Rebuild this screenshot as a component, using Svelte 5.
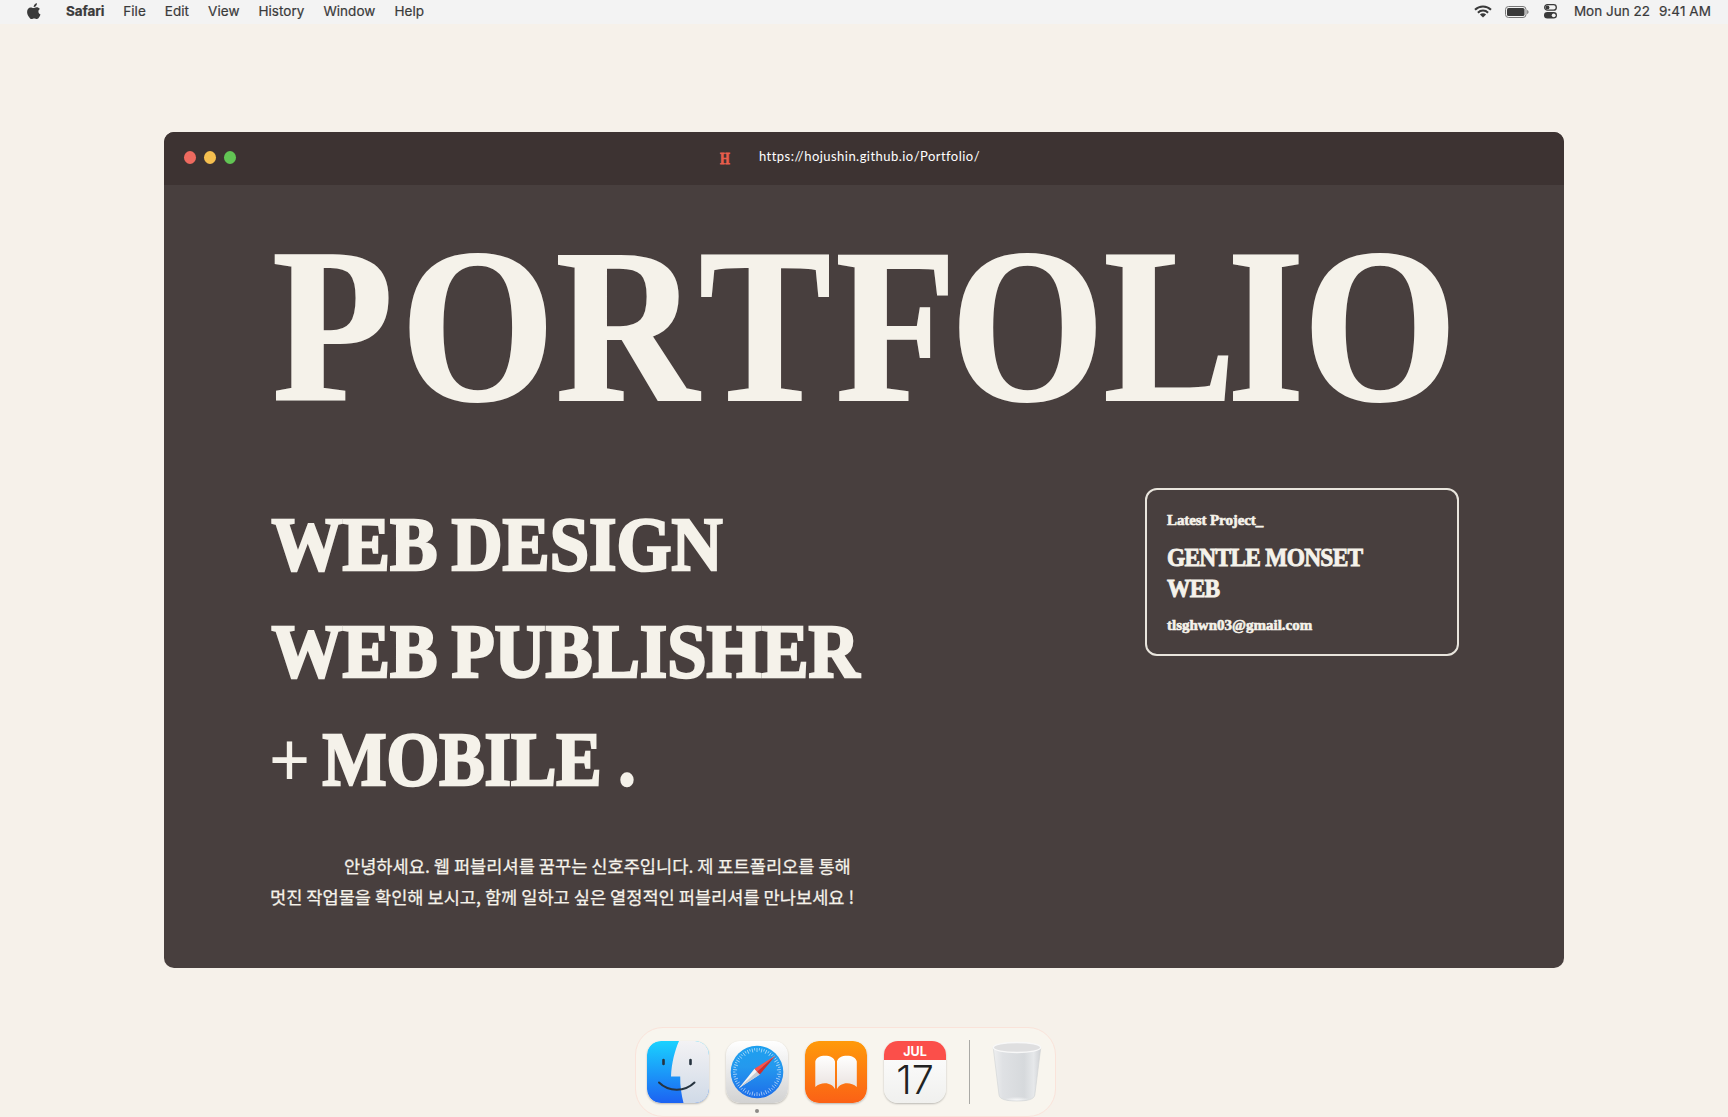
<script>
  const menus = ['File', 'Edit', 'View', 'History', 'Window', 'Help'];

  // Left edge of every headline letter, in the unscaled width of the type.
  const squeeze = 0.9;
  const titleX = [2.3, 130.8, 285.5, 428.9, 565.5, 680.6, 833.4, 957.3, 1033.1]
    .map((x) => x / squeeze)
    .join(' ');

  const roles = [
    { y: 60, words: [['WEB', 1.5, 166], ['DESIGN', 181.5, 271]] },
    { y: 167.3, words: [['WEB', 1.5, 166], ['PUBLISHER', 181.5, 408]] },
    { y: 275, words: [['+', 0, 39], ['MOBILE .', 52.5, 313]] },
  ];

  const ticks = Array.from({ length: 60 }, (_, i) => i * 6);
</script>

<div class="desktop">
  <header class="menubar">
    <svg class="apple" viewBox="0 0 14 17" width="14" height="17">
      <path d="M9.900 0.300c.1 1-.3 1.900-.9 2.600-.6.7-1.400 1.200-2.300 1.100-.1-.9.3-1.900.9-2.500C8.200.8 9.200.3 9.900.3zM12.900 5.900c-.9.6-1.500 1.400-1.500 2.600 0 1.400.8 2.500 2.100 3-.3.9-.7 1.700-1.200 2.500-.7 1-1.400 2-2.500 2-1 0-1.400-.6-2.600-.6s-1.600.6-2.600.6c-1.100 0-1.900-1.100-2.600-2.100C.7 12.200.1 10.500.1 8.900c0-2.900 1.700-4.500 3.500-4.500 1.100 0 2 .7 2.800.7.700 0 1.800-.8 3.100-.8 1.400 0 2.600.6 3.400 1.600z" />
    </svg>
    <b class="app-name">Safari</b>
    <nav>
      {#each menus as m}<span>{m}</span>{/each}
    </nav>
    <div class="status">
      <svg class="wifi" viewBox="0 0 18 13" width="18" height="13">
        <g fill="none" stroke="#3a3a3a" stroke-width="2">
          <path d="M1 4.800a11.300 11.300 0 0 1 16 0" />
          <path d="M3.900 7.700a7.200 7.200 0 0 1 10.200 0" />
        </g>
        <path d="M9 12.600 5.900 9.500a4.400 4.400 0 0 1 6.200 0z" fill="#3a3a3a" />
      </svg>
      <svg class="battery" viewBox="0 0 24 12" width="24" height="12">
        <rect x=".5" y=".5" width="20.500" height="11" rx="3" fill="none" stroke="#777" />
        <rect x="2" y="2" width="17.500" height="8" rx="1.600" fill="#3a3a3a" />
        <path d="M22.200 4v4c.8-.3 1.300-1.100 1.300-2s-.5-1.700-1.300-2z" fill="#777" />
      </svg>
      <svg class="control" viewBox="0 0 13 15" width="13" height="15">
        <rect x=".7" y=".7" width="11.600" height="5.400" rx="2.700" fill="none" stroke="#3a3a3a" stroke-width="1.300" />
        <circle cx="3.500" cy="3.400" r="1.900" fill="#3a3a3a" />
        <rect x="0" y="8" width="13" height="6.600" rx="3.300" fill="#3a3a3a" />
        <circle cx="9.700" cy="11.300" r="1.900" fill="#f2f2f2" />
      </svg>
      <span class="date">Mon Jun 22</span>
      <span class="time">9:41 AM</span>
    </div>
  </header>

  <main class="window">
    <div class="titlebar">
      <div class="lights"><i class="red"></i><i class="yellow"></i><i class="green"></i></div>
      <span class="favicon">H</span>
      <span class="url">https://hojushin.github.io/Portfolio/</span>
    </div>

    <div class="page">
      <svg class="title" viewBox="0 0 1188 170" width="1188" height="170">
        <text x={titleX} y="158.200" transform="scale({squeeze} 1)">PORTFOLIO</text>
      </svg>

      <div class="columns">
        <svg class="roles" viewBox="0 0 620 290" width="620" height="290">
          {#each roles as r}
            {#each r.words as [word, x, w]}
              <text {x} y={r.y} textLength={w} lengthAdjust="spacingAndGlyphs" class:plus={word === '+'}>{word}</text>
            {/each}
          {/each}
        </svg>

        <aside class="card">
          <div class="label">Latest Project_</div>
          <div class="project">GENTLE MONSET<br />WEB</div>
          <div class="mail">tlsghwn03@gmail.com</div>
        </aside>
      </div>

      <p class="intro">
        <span class="first">안녕하세요. 웹 퍼블리셔를 꿈꾸는 신호주입니다. 제 포트폴리오를 통해</span>
        <span>멋진 작업물을 확인해 보시고, 함께 일하고 싶은 열정적인 퍼블리셔를 만나보세요 !</span>
      </p>
    </div>
  </main>

  <footer class="dock">
    <svg class="icon" viewBox="0 0 62 62" width="62" height="62">
      <defs>
        <linearGradient id="fb" x2="0" y2="1"><stop stop-color="#1ad2ff" /><stop offset="1" stop-color="#1c62f2" /></linearGradient>
        <linearGradient id="fw" x2="0" y2="1"><stop stop-color="#f3f2f4" /><stop offset="1" stop-color="#d0dae7" /></linearGradient>
        <clipPath id="fc"><rect width="62" height="62" rx="14" /></clipPath>
      </defs>
      <g clip-path="url(#fc)">
        <rect width="62" height="62" fill="url(#fb)" />
        <path d="M32 0C28 9 24.500 22 24 35.500h9.200C33 45 34.500 54 36.500 62H62V0z" fill="url(#fw)" />
      </g>
      <g fill="none" stroke="#26333f" stroke-linecap="round">
        <path d="M16.500 19v4M43.500 19v4" stroke-width="2.600" />
        <path d="M12 41.500c9.500 9.500 26 9.500 35.500 0" stroke-width="2" />
      </g>
    </svg>

    <div class="running">
      <svg class="icon" viewBox="0 0 62 62" width="62" height="62">
        <defs>
          <linearGradient id="sb" x2="0" y2="1"><stop stop-color="#fff" /><stop offset="1" stop-color="#d2d2d2" /></linearGradient>
          <linearGradient id="sc" x2="0" y2="1"><stop stop-color="#1da0ef" /><stop offset=".4" stop-color="#2499ee" /><stop offset="1" stop-color="#1d6de9" /></linearGradient>
        </defs>
        <rect width="62" height="62" rx="14" fill="url(#sb)" />
        <circle cx="31" cy="31" r="26.300" fill="url(#sc)" />
        {#each ticks as a, i}
          <path d={i % 2 ? 'M31 7v2.400' : 'M31 7v4'} transform="rotate({a} 31 31)" stroke="#fff" stroke-opacity=".75" stroke-width=".7" />
        {/each}
        <path d="M13 47 28.500 27.800 33.800 33.500z" fill="#f4f4f4" />
        <path d="M13 47 31 30.500 33.800 33.500z" fill="#c5cbd3" />
        <path d="M49.700 14.500 28.500 27.800 31 30.700z" fill="#ff5148" />
        <path d="M49.700 14.500 33.800 33.500 31 30.700z" fill="#d02f2b" />
      </svg>
      <i class="dot"></i>
    </div>

    <svg class="icon" viewBox="0 0 62 62" width="62" height="62">
      <defs>
        <linearGradient id="bo" x2="0" y2="1"><stop stop-color="#ff9a0a" /><stop offset="1" stop-color="#fb6116" /></linearGradient>
        <linearGradient id="bp" x2="0" y2="1"><stop stop-color="#fff" /><stop offset="1" stop-color="#e9e2df" /></linearGradient>
      </defs>
      <rect width="62" height="62" rx="14" fill="url(#bo)" />
      <path d="M10.300 20.500C11 16.500 15 14.700 20 14.700s9.300 1.800 10 5.800V48c-2-3.500-5.500-5.700-10-5.700-3.700 0-7 1.200-9.700 3.700zM51.800 20.500C51 16.500 47 14.700 42 14.700s-9.300 1.800-10 5.800V48c2-3.500 5.500-5.700 10-5.700 3.700 0 7 1.200 9.800 3.700z" fill="url(#bp)" />
    </svg>

    <div class="icon calendar">
      <div class="month">JUL</div>
      <div class="day">17</div>
    </div>

    <i class="divider"></i>

    <svg class="trash" viewBox="0 0 50 62" width="50" height="62">
      <defs>
        <linearGradient id="tb"><stop stop-color="#eeeff0" /><stop offset=".2" stop-color="#dfe1e4" /><stop offset=".65" stop-color="#d6d9dc" /><stop offset=".85" stop-color="#e6e8ea" /><stop offset="1" stop-color="#d0d2d5" /></linearGradient>
        <radialGradient id="tg" cx=".5" cy="1" r=".4"><stop stop-color="#fff" stop-opacity=".9" /><stop offset="1" stop-color="#fff" stop-opacity="0" /></radialGradient>
      </defs>
      <path d="M1.200 6.500 7 54c.6 4.300 7 6 18 6s17-1.700 17.800-6L48.800 6.500z" fill="url(#tb)" stroke="#cfd1d3" stroke-width=".6" />
      <path d="M7 53.500c.6 4.300 7 6 18 6s17-1.700 17.800-6C40 49 10 49 7 53.500z" fill="url(#tg)" />
      <ellipse cx="25" cy="6.500" rx="23.700" ry="5" fill="#dfdfe0" stroke="#f8f8f8" stroke-width="1.300" />
    </svg>
  </footer>
</div>

<style>
  :global(body) { margin: 0; overflow: hidden; }

  .desktop {
    width: 1728px;
    height: 1117px;
    box-sizing: border-box;
    display: flex;
    flex-direction: column;
    align-items: center;
    background: #f6f1ea;
    font-family: Inter, "Liberation Sans", sans-serif;
    overflow: hidden;
  }

  .menubar {
    width: 100%;
    height: 24px;
    flex: none;
    box-sizing: border-box;
    padding: 0 17px 1px 27px;
    display: flex;
    align-items: center;
    background: #f3f3f3;
    color: #3a3a3a;
    font-size: 13.500px;
    line-height: 23px;
    white-space: nowrap;
    -webkit-text-stroke: 0.2px #3a3a3a;
  }
  .apple { fill: #3a3a3a; }
  .app-name { margin-left: 25px; font-weight: 700; letter-spacing: -0.1px; }
  nav { display: flex; gap: 19px; margin-left: 19px; letter-spacing: 0.040px; }
  .status { display: flex; align-items: center; margin-left: auto; }
  .battery { margin-left: 13px; }
  .control { margin-left: 15px; }
  .date { margin-left: 17px; }
  .time { margin-left: 9px; letter-spacing: 0.080px; }

  .window {
    width: 1400px;
    height: 836px;
    margin-top: 108px;
    flex: none;
    border-radius: 10px;
    overflow: hidden;
    background: #483f3e;
    color: #f5f2ea;
  }
  .titlebar {
    height: 53px;
    display: flex;
    align-items: center;
    background: #3d3332;
  }
  .lights { display: flex; gap: 8px; margin: -2px 0 0 20px; width: 536px; }
  .lights i { width: 12px; height: 13px; border-radius: 50%; }
  .red { background: #ee6a5f; }
  .yellow { background: #f5bf4f; }
  .green { background: #62c554; }
  .favicon {
    width: 39px;
    font: bold 16px/20px "Liberation Serif", serif;
    color: #e85d4c;
    -webkit-text-stroke: 0.8px #e85d4c;
    transform: scaleX(0.78);
    transform-origin: left;
  }
  .url {
    font: 13px/20px Lato, sans-serif;
    color: #fff;
    letter-spacing: 0.460px;
    margin-top: -5px;
  }

  .page { padding: 57px 104px 0 106px; }
  svg text {
    font-family: "Liberation Serif", "Times New Roman", serif;
    font-weight: 700;
    fill: #f5f2ea;
    stroke: #f5f2ea;
  }
  .title { display: block; overflow: visible; }
  .title text { font-size: 220px; stroke-width: 2px; }
  .columns {
    display: flex;
    justify-content: space-between;
    align-items: flex-start;
    margin-top: 76px;
    width: 1189px;
  }
  .roles { margin-top: 22px; overflow: visible; }
  .roles text { font-size: 77px; stroke-width: 2.600px; }
  .roles .plus { font-weight: 400; stroke-width: 2px; }

  .card {
    width: 314px;
    height: 168px;
    box-sizing: border-box;
    border: 2px solid #e9e5dd;
    border-radius: 12px;
    padding: 20px 0 0 20px;
    font-family: "Liberation Serif", serif;
    font-weight: 700;
    -webkit-text-stroke: 0.6px #f5f2ea;
    white-space: nowrap;
  }
  .label { font-size: 15px; line-height: 20px; letter-spacing: -0.1px; }
  .project {
    width: 260px;
    font-size: 26px;
    line-height: 31px;
    margin-top: 12px;
    letter-spacing: -0.8px;
    -webkit-text-stroke-width: 0.9px;
    transform: scaleX(0.9);
    transform-origin: left;
  }
  .mail { font-size: 15px; line-height: 20px; margin-top: 11px; }

  .intro {
    margin: 50px 0 0 0;
    display: flex;
    flex-direction: column;
    font: 400 17.600px/31px "Noto Sans CJK KR", sans-serif;
    -webkit-text-stroke: 0.25px #f5f2ea;
    white-space: nowrap;
  }
  .first { margin-left: 74px; }

  .dock {
    width: 421px;
    height: 90px;
    margin-top: 59px;
    margin-right: 37px;
    flex: none;
    box-sizing: border-box;
    border: 1px solid #fae3da;
    border-radius: 28px;
    background: #f8f5ee;
    display: flex;
    align-items: flex-start;
    padding: 13px 0 0 11px;
    gap: 17px;
  }
  .icon { border-radius: 14px; box-shadow: 0 1px 2px rgba(0, 0, 0, 0.25); flex: none; display: block; }
  .running { display: flex; flex-direction: column; align-items: center; gap: 6px; }
  .dot { width: 4px; height: 4px; border-radius: 50%; background: #8d8a86; }
  .calendar {
    width: 62px;
    height: 62px;
    overflow: hidden;
    background: linear-gradient(#fff, #f0f0ee);
    text-align: center;
  }
  .month {
    height: 19px;
    background: #fb4f4a;
    color: #fff;
    font-size: 12.500px;
    line-height: 21px;
    font-weight: 700;
  }
  .day { font-size: 39.500px; line-height: 41px; font-weight: 300; color: #222; letter-spacing: 0; }
  .divider { width: 1px; height: 64px; margin: -1px -1px 0 6px; background: #aaa9a5; }
  .trash { margin-left: 6px; }
</style>
